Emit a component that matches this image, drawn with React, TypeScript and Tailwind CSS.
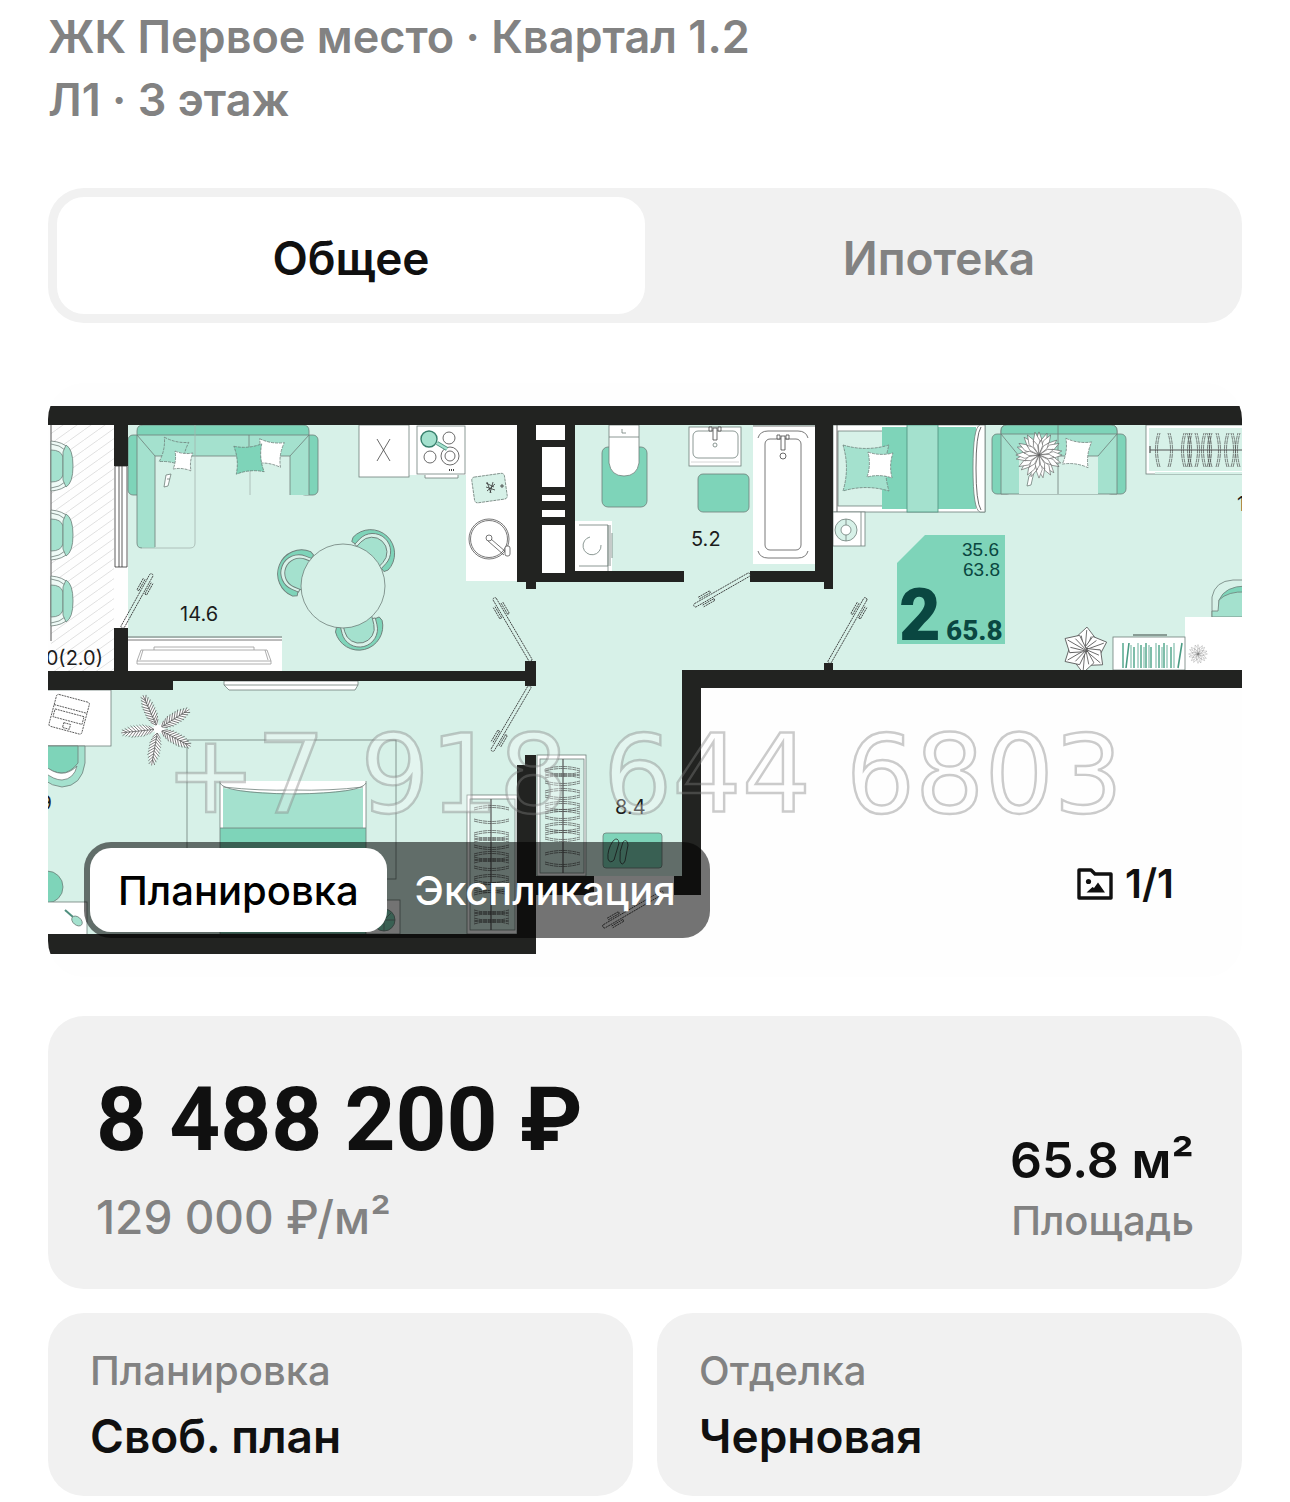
import { useState } from 'react';

type Rect = [x: number, y: number, w: number, h: number];

const FLOOR = '#d7f1e8';
const MID = '#a4e1ce';
const DARK = '#7ed4b9';
const WALL = '#222321';
const LINE = '#6f7f7a';

const floors: Rect[] = [
  [128, 425, 389, 246],
  [517, 582, 165, 100],
  [575, 425, 240, 146],
  [682, 571, 151, 99],
  [833, 425, 409, 245],
  [48, 681, 477, 253],
  [525, 671, 157, 205],
];

const walls: Rect[] = [
  [48, 406, 1194, 19],
  [114, 425, 14, 41],
  [114, 628, 14, 44],
  [48, 671, 478, 10],
  [48, 681, 125, 9],
  [517, 425, 58, 157],
  [526, 582, 10, 7],
  [525, 661, 11, 25],
  [575, 571, 109, 11],
  [750, 571, 83, 11],
  [815, 425, 18, 157],
  [824, 582, 9, 7],
  [824, 663, 9, 8],
  [682, 670, 560, 18],
  [682, 688, 19, 207],
  [536, 876, 58, 19],
  [674, 876, 8, 19],
  [525, 755, 11, 12],
  [517, 765, 19, 170],
  [48, 934, 488, 20],
];

const shafts: Rect[] = [
  [536, 425, 29, 15],
  [542, 447, 23, 40],
  [542, 495, 23, 6],
  [542, 510, 23, 7],
  [542, 525, 23, 48],
];

const books = [2, 10, 13, 17, 20, 23, 25, 28, 30, 35, 38, 41, 43, 46, 50, 53];

function Blocks({ items, fill }: { items: Rect[]; fill: string }) {
  return (
    <>
      {items.map(([x, y, w, h]) => (
        <rect key={`${x}-${y}`} x={x} y={y} width={w} height={h} fill={fill} />
      ))}
    </>
  );
}

// Door leaf, drawn from its free end towards the hinge
function Door({ tip, hinge }: { tip: [number, number]; hinge: [number, number] }) {
  const dx = hinge[0] - tip[0];
  const dy = hinge[1] - tip[1];
  const length = Math.hypot(dx, dy);
  const angle = (Math.atan2(dy, dx) * 180) / Math.PI;
  return (
    <g
      transform={`translate(${tip[0]} ${tip[1]}) rotate(${angle})`}
      fill="none"
      stroke="#333"
      strokeWidth="0.8"
      strokeDasharray="2 0.7"
    >
      <rect x="0" y="-1.8" width={length} height="3.6" rx="1.5" />
      <path d="M8 -3.5H21M8 -5.5H21V-3.5M8 3.5H21M8 5.5H21V3.5" />
    </g>
  );
}

function DiningChair({ x, y, turn }: { x: number; y: number; turn: number }) {
  return (
    <g transform={`translate(${x} ${y}) rotate(${turn})`} stroke={LINE} strokeWidth="0.9">
      <path d="M-24 5A24 24 0 0 1 24 5L22 9L16 8L-16 8L-22 9Z" fill={DARK} />
      <path d="M-18 9V2A18 18 0 0 1 18 2V9Z" fill={FLOOR} />
      <path d="M-15 14V3A15 15 0 0 1 15 3V14Z" fill={MID} />
    </g>
  );
}

function BalconyChair({ y }: { y: number }) {
  return (
    <g transform={`translate(51 ${y})`} stroke={LINE} strokeWidth="0.8">
      <path d="M0 -25Q12 -24 17 -18V18Q12 24 0 25Z" fill="#eefaf6" />
      <path d="M0 -22Q9 -21 14 -16V16Q9 21 0 22" fill="none" />
      <path d="M0 -16Q10 -16 12 -9V9Q10 16 0 16Z" fill={MID} />
      <path d="M12 -14L15 -21Q22 -17 22 0Q22 17 15 21L12 14Z" fill={MID} />
    </g>
  );
}

function Pillow({ x, y, size, turn, fill }: { x: number; y: number; size: number; turn: number; fill: string }) {
  return (
    <path
      transform={`translate(${x} ${y}) rotate(${turn}) scale(${size / 20})`}
      d="M-10 -10Q0 -7 10 -10Q7 0 10 10Q0 7 -10 10Q-7 0 -10 -10Z"
      fill={fill}
      stroke={LINE}
      strokeWidth="0.8"
      strokeDasharray="3 1"
      vectorEffect="non-scaling-stroke"
    />
  );
}

function Hangers({ x, width, rows }: { x: number; width: number; rows: number[] }) {
  return (
    <g fill="none" stroke="#4a4a4a" strokeWidth="0.7">
      {rows.map((y, i) => {
        const bend = i % 2 ? 5 : -5;
        return (
          <path
            key={y}
            strokeDasharray="4 0.6"
            d={`M${x} ${y}Q${x + width / 2} ${y + bend} ${x + width} ${y}M${x} ${y + 2}Q${x + width / 2} ${y + 2 + bend} ${x + width} ${y + 2}`}
          />
        );
      })}
    </g>
  );
}

function SpikyPlant({ x, y, r, leaves }: { x: number; y: number; r: number; leaves: number }) {
  return (
    <g transform={`translate(${x} ${y}) scale(${r / 20})`} fill="#fff" stroke="#555" strokeWidth="0.5">
      {Array.from({ length: leaves }, (_, i) => (
        <path key={i} transform={`rotate(${(360 / leaves) * i + (i % 2) * 5})`} d="M0 0L-3 -13L0 -21L3 -13Z" />
      ))}
      {Array.from({ length: leaves / 2 }, (_, i) => (
        <path key={i} transform={`rotate(${(720 / leaves) * i + 9})`} d="M0 0L-2 -9L0 -14L2 -9Z" />
      ))}
    </g>
  );
}

function Palm() {
  return (
    <g transform="translate(158 729)" stroke="#555" strokeWidth="0.7">
      {[-24, 58, 118, 190, 264].map(turn => (
        <g key={turn} transform={`rotate(${turn})`}>
          <path d="M0 0C-7 -10 -6 -30 0 -37C6 -30 7 -10 0 0Z" fill="#fff" stroke="none" />
          <path
            d="M0 -4V-37M0 -4L-4 -9M0 -4L4 -9M0 -7L-5 -12M0 -7L5 -12M0 -10L-6 -15M0 -10L6 -15M0 -13L-6 -18M0 -13L6 -18M0 -16L-6 -21M0 -16L6 -21M0 -19L-6 -24M0 -19L6 -24M0 -22L-6 -27M0 -22L6 -27M0 -25L-5 -30M0 -25L5 -30M0 -28L-4 -33M0 -28L4 -33M0 -31L-3 -36M0 -31L3 -36"
            fill="none"
          />
        </g>
      ))}
      <circle r="4" fill="#fff" stroke="none" />
    </g>
  );
}

function LivingRoom() {
  return (
    <g stroke={LINE} strokeWidth="0.8">
      {/* corner sofa */}
      <rect x="128" y="435" width="18" height="60" rx="5" fill={DARK} />
      <rect x="300" y="435" width="18" height="60" rx="5" fill={DARK} />
      <path d="M137 543V431Q137 425 143 425H303Q309 425 309 431V495H290V456H155V548H142Q137 548 137 543Z" fill={MID} stroke="none" />
      <path d="M137 435V431Q137 425 143 425H303Q309 425 309 431V435Z" fill={DARK} />
      <path d="M155 456H195V543Q195 548 190 548H155Z" fill={FLOOR} stroke="none" />
      <rect x="195" y="456" width="95" height="40" fill={FLOOR} stroke="none" />
      <path d="M137 435L155 456V547M309 435L290 456M155 456H290V495M309 435V495M249 435V456M137 435V543Q137 548 142 548" fill="none" />
      <path d="M250 456V495M195 425V543Q195 548 190 548H142" fill="none" stroke="#a3b5af" />
      <Pillow x={174} y={452} size={25} turn={12} fill={MID} />
      <Pillow x={183} y={461} size={18} turn={6} fill="#fff" />
      <Pillow x={270} y={453} size={25} turn={9} fill="#fff" />
      <Pillow x={249} y={459} size={28} turn={-5} fill={DARK} />
      <path d="M166 475L171 474L168 486L164 487ZM167 479H170" fill="#fff" />

      {/* kitchen */}
      <path d="M359 425H517V581H466V475H359Z" fill="#fff" stroke="none" />
      <rect x="409" y="475" width="57" height="20" fill={FLOOR} stroke="none" />
      <rect x="359" y="425" width="50" height="52" fill="#fff" />
      <path d="M377 439L390 461M390 439L377 461" fill="none" stroke="#444" />
      <path d="M425 475V478H458V475" fill="#fff" />
      <rect x="417" y="426" width="48" height="48" fill="#fff" />
      <g fill="none" stroke="#444">
        <circle cx="449" cy="438" r="6" />
        <circle cx="430" cy="457" r="6" />
        <circle cx="450" cy="456" r="9" />
        <circle cx="450" cy="456" r="5" />
        <path d="M449 470H455" strokeWidth="2" strokeDasharray="1 1" />
      </g>
      <path d="M437 443L447 449" stroke="#4e8f7e" strokeWidth="4" />
      <path d="M437 443L447 449" stroke={MID} strokeWidth="2.5" />
      <circle cx="429" cy="439" r="8" fill={MID} stroke="#377f6c" strokeWidth="1.4" />
      <rect x="473" y="475" width="33" height="26" rx="3" transform="rotate(-8 490 488)" fill={FLOOR} strokeDasharray="3 0.8" />
      <path d="M486 483L494 487M486 487L495 490M487 482L491 493M493 482L490 493M487 491L495 484M501 485H503V487H501Z" fill="none" stroke="#333" />
      <g fill="#fff" stroke="#555">
        <circle cx="489" cy="539" r="20" />
        <circle cx="489" cy="539" r="18.5" fill="none" />
        <circle cx="489" cy="538" r="3" />
        <path d="M488 541L504 555M491 539L506 552" fill="none" />
        <rect x="505" y="546" width="5" height="10" rx="2" />
      </g>

      <DiningChair x={297} y={572} turn={-68} />
      <DiningChair x={374} y={550} turn={43} />
      <DiningChair x={360} y={631} turn={166} />
      <circle cx="343" cy="586" r="42" fill={FLOOR} />

      {/* tv stand */}
      <rect x="128" y="638" width="154" height="33" fill="#fff" stroke="none" />
      <path d="M128 637H282M128 640H282" stroke="#555" />
      <path d="M141 650H267L271 661V664H137V661ZM154 650V647H254V650M143 650L140 660M265 650L268 660M137 661H271" fill="none" stroke="#999" />
    </g>
  );
}

function Bathroom() {
  return (
    <g stroke={LINE} strokeWidth="0.8">
      <rect x="602" y="447" width="45" height="60" rx="6" fill={DARK} />
      <path d="M609 425H639V463Q637 476 624 476Q611 476 609 463Z" fill="#fff" />
      <path d="M609 437H639M622 429V433H626" fill="none" />
      <path d="M575 521H612V571H575Z" fill="#fff" stroke="none" />
      <path d="M579 525H608V566H579M610 525V566M612 533V558M608 525V571" fill="none" />
      <path d="M590 537A9 9 0 1 0 601 545" fill="none" />
      <rect x="689" y="427" width="52" height="39" fill="#fff" />
      <rect x="693" y="431" width="45" height="27" rx="5" fill="none" />
      <path d="M691 462H739" stroke="#ccc" />
      <rect x="698" y="474" width="51" height="38" rx="5" fill={DARK} />
      <path d="M713 428H717V440H713ZM709 427H712V431H709ZM718 427H721V431H718Z" fill="#fff" stroke="#444" />
      <circle cx="715" cy="445" r="2" fill="none" />
      <rect x="753" y="426" width="62" height="138" fill="#fff" stroke="none" />
      <path d="M753 426H815M758 438Q760 431 768 431H798Q806 431 808 438M758 551Q760 558 768 558H798Q806 558 808 551" fill="none" stroke="#555" />
      <rect x="765" y="439" width="36" height="111" rx="5" fill="none" stroke="#555" />
      <path d="M781 436H785V450H781ZM777 435H780V439H777ZM786 435H789V439H786Z" fill="#fff" stroke="#444" />
      <circle cx="783" cy="456" r="3" fill="none" stroke="#444" />
    </g>
  );
}

function Studio() {
  return (
    <g stroke={LINE} strokeWidth="0.8">
      {/* bed */}
      <rect x="833" y="425" width="152" height="87" fill="#fff" />
      <rect x="838" y="431" width="60" height="75" fill={FLOOR} />
      <rect x="882" y="427" width="94" height="82" fill={DARK} stroke="none" />
      <Pillow x={866} y={468} size={46} turn={0} fill={MID} />
      <Pillow x={880} y={465} size={25} turn={2} fill="#fff" />
      <rect x="907" y="425" width="31" height="87" fill={MID} stroke="#4e8f7e" />
      <path d="M985 425H980Q973 427 973 468Q973 510 980 512H985Z" fill="#fff" />
      <path d="M981 427Q976 435 976 468Q976 502 981 510M837 425V512" fill="none" stroke="#444" />
      <rect x="833" y="512" width="32" height="34" fill="#fff" />
      <path d="M861 512V546" />
      <circle cx="846" cy="530" r="11" fill={FLOOR} />
      <circle cx="846" cy="530" r="5" fill="#fff" />
      <path d="M846 519V525M846 535V541" />

      {/* sofa */}
      <rect x="992" y="434" width="20" height="60" rx="5" fill={DARK} />
      <rect x="1106" y="434" width="20" height="60" rx="5" fill={DARK} />
      <path d="M1001 494V431Q1001 425 1007 425H1111Q1117 425 1117 431V494Z" fill={MID} />
      <path d="M1001 434V431Q1001 425 1007 425H1111Q1117 425 1117 431V434Z" fill={DARK} />
      <rect x="1019" y="456" width="79" height="38" fill={FLOOR} stroke="none" />
      <path d="M1001 434L1019 456H1098L1117 434M1058 425V494" fill="none" />
      <path d="M1029 476L1034 472L1031 485L1027 486Z" fill="#fff" />
      <SpikyPlant x={1039} y={455} r={22} leaves={24} />
      <Pillow x={1077} y={453} size={26} turn={8} fill="#fff" />

      {/* wardrobe */}
      <rect x="1146" y="425" width="100" height="49" fill="#fff" />
      <rect x="1149" y="428" width="93" height="43" fill={FLOOR} stroke="none" />
      <path d="M1150 450H1242M1150 446V453" stroke="#555" strokeWidth="1.2" />
      <rect x="1155" y="472" width="90" height="2" fill={FLOOR} stroke="none" />
      <g transform="translate(1150 467) rotate(-90)">
        <Hangers x={0} width={34} rows={[8, 18, 34, 37, 40, 45, 54, 57, 60, 66, 77, 81, 88]} />
      </g>

      {/* desk, shelf and plants */}
      <path d="M1212 617V597Q1215 581 1233 580H1246V617Z" fill={FLOOR} />
      <path d="M1219 600Q1225 586 1246 586V617H1219Z" fill={DARK} />
      <path d="M1219 600Q1228 591 1246 592V617H1212V611H1218Z" fill={MID} />
      <rect x="1185" y="617" width="57" height="53" fill="#fff" stroke="none" />
      <rect x="1113" y="637" width="72" height="33" fill="#fff" />
      <path d="M1133 635H1167" strokeWidth="1.4" />
      {books.map((x, i) => (
        <path
          key={x}
          d={`M${1121 + x} ${643 + (i % 3) * 2}V668`}
          stroke={i % 2 ? '#a3cfc2' : '#5fae95'}
          strokeWidth="1.6"
        />
      ))}
      <path d="M1129 643L1126 668M1182 643L1178 668" stroke="#4b9c84" strokeWidth="1.6" />
      <SpikyPlant x={1198} y={654} r={9} leaves={16} />
      <g transform="translate(1085 650)" fill="#fff" stroke="#555">
        {[5, 70, 130, 185, 240, 300].map(turn => (
          <path key={turn} transform={`rotate(${turn})`} d="M0 3L-10 -12L0 -23L10 -12ZM0 3V-20M0 3L-5 -14M0 3L5 -14" />
        ))}
      </g>
    </g>
  );
}

function Bedroom() {
  return (
    <g stroke={LINE} strokeWidth="0.8">
      {/* desk with laptop */}
      <rect x="44" y="690" width="67" height="56" fill="#fff" />
      <g transform="rotate(15 70 715)" fill="#fff" stroke="#444" strokeDasharray="2 0.8">
        <rect x="52" y="698" width="34" height="33" rx="2" />
        <path d="M52 709H86M54 713H84V721H54ZM66 724H73V729H66Z" />
      </g>
      <path d="M44 746H85V763Q82 786 62 787Q52 786 44 780Z" fill={MID} />
      <path d="M44 746H78V763Q70 773 62 773Q54 773 44 766Z" fill={DARK} />
      <path d="M44 765Q62 781 77 766Q74 779 62 780Q54 780 44 772Z" fill="#fff" />
      <circle cx="47" cy="887" r="16" fill={DARK} />
      <rect x="44" y="902" width="43" height="36" fill="#fff" />
      <path d="M65 910L73 917" stroke="#4e8f7e" strokeWidth="2" />
      <ellipse cx="77" cy="921" rx="6" ry="4" transform="rotate(40 77 921)" fill={MID} />

      {/* tv, rug and bed */}
      <path d="M224 681H358V685L355 690H229L224 685Z" fill="#fff" />
      <path d="M224 685H358" />
      <rect x="187" y="740" width="209" height="139" fill="none" />
      <rect x="220" y="781" width="146" height="153" fill="#fff" stroke="none" />
      <path d="M223 788Q292 799 363 788V828H223Z" fill={MID} stroke="none" />
      <path d="M220 828H366V934H220Z" fill={DARK} />
      <path d="M220 783Q224 793 293 794Q362 793 366 783M223 787Q260 791 293 790Q330 791 363 787M220 781V828M366 781V828" fill="none" />
      <rect x="366" y="900" width="34" height="34" fill="#fff" />
      <circle cx="384" cy="920" r="11" fill={DARK} />
      <path d="M384 920L391 913M384 920H395M384 920V931" />

      {/* wardrobe */}
      <rect x="467" y="795" width="50" height="139" fill="#fff" />
      <rect x="470" y="799" width="45" height="131" fill={FLOOR} />
      <path d="M491 799V930" stroke="#555" strokeWidth="1.2" />
      <Hangers x={474} width={35} rows={[808, 819, 833, 836, 840, 845, 854, 857, 861, 866, 877, 880, 885, 888, 893, 910, 914, 918, 922]} />
    </g>
  );
}

function Hallway() {
  return (
    <g stroke={LINE} strokeWidth="0.8">
      <rect x="537" y="755" width="49" height="121" fill="#fff" />
      <rect x="540" y="759" width="44" height="114" fill={FLOOR} />
      <path d="M563 759V873" stroke="#555" strokeWidth="1.2" />
      <Hangers x={545} width={35} rows={[769, 772, 776, 781, 791, 795, 804, 807, 812, 816, 825, 828, 833, 837, 853, 862]} />
      <rect x="603" y="833" width="59" height="35" rx="3" fill={DARK} />
      <path d="M608 859Q607 850 613 841Q618 836 619 843L614 860Q610 864 608 859ZM620 861Q619 851 623 842Q627 838 628 845L625 861Q622 867 620 861Z" fill="none" stroke="#333" />
    </g>
  );
}

function FloorPlan() {
  return (
    <svg
      viewBox="48 383 1194 594"
      role="img"
      aria-label="План квартиры"
      className="block w-full rounded-[36px]"
      fontFamily="Inter, 'Liberation Sans', sans-serif"
    >
      <defs>
        <pattern id="hatch" width="14" height="10" patternUnits="userSpaceOnUse">
          <path d="M0 10L14 0" stroke="#d8d8d8" strokeWidth="0.8" />
        </pattern>
        <text id="phone" x="165" y="812" fontSize="109" fontFamily="'DejaVu Sans', sans-serif">
          +7 918 644 6803
        </text>
      </defs>
      <rect x="48" y="383" width="1194" height="594" fill="#fefefe" />
      <Blocks items={floors} fill={FLOOR} />

      <rect x="51" y="425" width="63" height="246" fill="url(#hatch)" />
      <path d="M51 425V641" stroke="#555" />
      <BalconyChair y={466} />
      <BalconyChair y={535} />
      <BalconyChair y={601} />
      <path d="M115 466H127V567H115ZM119 466V567M122 466V567" fill="#fff" stroke="#333" strokeWidth="0.8" />

      <LivingRoom />
      <Bathroom />
      <Studio />
      <Bedroom />
      <Hallway />
      <Palm />

      <g fontSize="20" fill="#1c1c1c">
        <text x="180" y="621">14.6</text>
        <text x="691" y="546">5.2</text>
        <text x="615" y="814">8.4</text>
        <text x="103" y="665" textAnchor="end">.0(2.0)</text>
        <text x="52" y="810" textAnchor="end">9</text>
        <text x="1237" y="511">1</text>
      </g>

      {/* the watermark tints the floor but only outlines itself over the walls */}
      <use href="#phone" fill="#fff" fillOpacity="0.3" />
      <Blocks items={walls} fill={WALL} />
      <Blocks items={shafts} fill="#fff" />

      <Door tip={[152, 574]} hinge={[122, 628]} />
      <Door tip={[494, 598]} hinge={[531, 661]} />
      <Door tip={[492, 751]} hinge={[530, 686]} />
      <Door tip={[694, 606]} hinge={[750, 574]} />
      <Door tip={[866, 598]} hinge={[829, 663]} />
      <Door tip={[603, 927]} hinge={[663, 892]} />

      <path d="M925 535H1005V644H897V563Z" fill={DARK} />
      <g fill="#0a4741">
        <g fontSize="19" textAnchor="end" fontFamily="'Liberation Sans', sans-serif">
          <text x="999" y="556">35.6</text>
          <text x="1000" y="576">63.8</text>
        </g>
        <text x="899" y="640" fontSize="72" fontWeight="900" fontFamily="Roboto, sans-serif">2</text>
        <text x="946" y="640" fontSize="28" fontWeight="800" fontFamily="Roboto, sans-serif">65.8</text>
      </g>

      <use href="#phone" fill="none" stroke="#808080" strokeOpacity="0.4" strokeWidth="2.4" />
    </svg>
  );
}

function GalleryIcon() {
  return (
    <svg viewBox="0 0 36 32" className="h-8 w-9" aria-hidden="true">
      <path d="M2 2H14L18 6H34V30H2Z" fill="none" stroke="#101010" strokeWidth="3.4" strokeLinejoin="round" />
      <circle cx="11.5" cy="13.5" r="2.6" fill="#101010" />
      <path d="M9.5 24.5L15.5 19L17 20L21 14.5L28 24.5Z" fill="#101010" />
    </svg>
  );
}

function InfoCard({ label, value }: { label: string; value: string }) {
  return (
    <div className="rounded-[36px] bg-[#f1f1f1] px-[42px] pt-7 pb-6">
      <dt className="text-[40px] leading-[60px] font-medium text-[#828282]">{label}</dt>
      <dd className="text-[46px] leading-[71px] font-semibold text-[#101010]">{value}</dd>
    </div>
  );
}

const tabs = ['Общее', 'Ипотека'];
const views = ['Планировка', 'Экспликация'];

function App() {
  const [tab, setTab] = useState(tabs[0]);
  const [view, setView] = useState(views[0]);

  return (
    <main className="min-h-screen bg-white px-12 pt-[5px] pb-1.5 font-['Inter','Liberation_Sans',sans-serif]">
      <header className="text-[45px] leading-[63px] font-semibold text-[#828282]">
        <p>ЖК Первое место · Квартал 1.2</p>
        <p>Л1 · 3 этаж</p>
      </header>

      <div className="mt-[57px] grid grid-cols-2 rounded-[36px] bg-[#f1f1f1] p-[9px]">
        {tabs.map(name => (
          <button
            key={name}
            type="button"
            aria-pressed={tab === name}
            onClick={() => setTab(name)}
            className={`h-[117px] rounded-[27px] pt-1.5 text-[46px] font-semibold ${
              tab === name ? 'bg-white text-[#101010]' : 'text-[#828282]'
            }`}
          >
            {name}
          </button>
        ))}
      </div>

      <section className="relative mt-[60px]">
        <FloorPlan />
        <div className="absolute bottom-[39px] left-9 flex rounded-[27px] bg-black/55 p-1.5">
          {views.map(name => (
            <button
              key={name}
              type="button"
              aria-pressed={view === name}
              onClick={() => setView(name)}
              className={`h-[84px] rounded-[21px] px-7 pt-0.5 text-[40px] font-medium ${
                view === name ? 'bg-white text-black' : 'text-white'
              }`}
            >
              {name}
            </button>
          ))}
        </div>
        <div className="absolute right-[68px] bottom-[69px] flex items-center gap-3 text-[40px] leading-[48px] font-semibold text-[#101010]">
          <GalleryIcon />
          <span>1/1</span>
        </div>
      </section>

      <section className="mt-[39px] flex items-end justify-between rounded-[36px] bg-[#f1f1f1] px-12 pt-12 pb-[39px]">
        <div>
          <p className="font-['Roboto',sans-serif] text-[89px] leading-[112px] font-bold text-[#101010]">8 488 200 ₽</p>
          <p className="pt-2 text-[46px] leading-[66px] font-medium text-[#828282]">129 000 ₽/м²</p>
        </div>
        <div className="text-right">
          <p className="text-[50px] leading-[64px] font-semibold text-[#101010]">65.8 м²</p>
          <p className="text-[40px] leading-[58px] font-medium text-[#828282]">Площадь</p>
        </div>
      </section>

      <dl className="mt-6 grid grid-cols-2 gap-6">
        <InfoCard label="Планировка" value="Своб. план" />
        <InfoCard label="Отделка" value="Черновая" />
      </dl>
    </main>
  );
}

export default App;
